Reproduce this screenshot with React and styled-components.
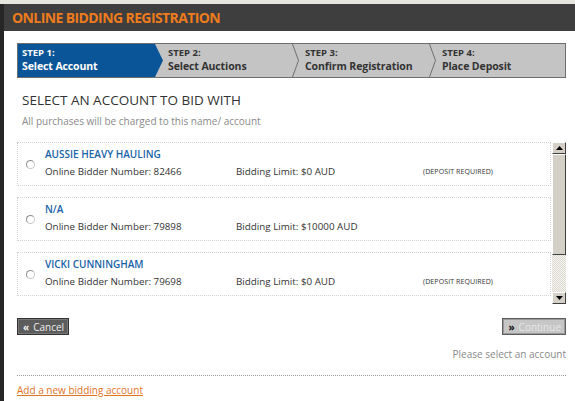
import React from "react";
import styled, { createGlobalStyle } from "styled-components";

const GlobalStyle = createGlobalStyle`
  html, body {
    margin: 0;
    padding: 0;
    background: #fff;
  }
  body {
    font-family: "Open Sans", "DejaVu Sans", sans-serif;
    color: #333;
  }
`;

const Page = styled.div`
  width: 575px;
  height: 401px;
  overflow: hidden;
  box-sizing: border-box;
  border-top: 4px solid #e6e6de;
  display: flex;
`;

const LeftRail = styled.div`
  width: 4px;
  flex: none;
  background: #262626;
`;

const Main = styled.div`
  flex: 1;
  min-width: 0;
  display: flex;
  flex-direction: column;
`;

const TitleBar = styled.div`
  height: 27px;
  flex: none;
  background: #3e3e3e;
  display: flex;
  align-items: center;
  padding-left: 8px;
  color: #ee7b1c;
  font-weight: 700;
  font-size: 14px;
  letter-spacing: -0.6px;
`;

const Content = styled.div`
  padding: 12px 9px 0 13px;
  display: flex;
  flex-direction: column;
`;

const Steps = styled.div`
  display: grid;
  grid-template-columns: 137px 137px 137px 1fr;
  height: 33px;
  border: 1px solid #6e6e6e;
  background: #c4c4c4;
`;

const Step = styled.div`
  display: flex;
  background: ${(p) => (p.$active ? "#0a5598" : "transparent")};
  color: ${(p) => (p.$active ? "#fff" : "#333")};
`;

const StepText = styled.div`
  padding: 2px 0 0 ${(p) => p.$pad}px;
  font-weight: 700;
`;

const StepNum = styled.div`
  font-size: 9.5px;
  line-height: 13px;
`;

const StepName = styled.div`
  font-size: 10.5px;
  line-height: 15px;
  white-space: nowrap;
  letter-spacing: -0.1px;
`;

const Sep = styled.svg`
  flex: none;
  width: 8px;
  height: 33px;
  display: block;
`;

const Heading = styled.h2`
  margin: 13px 0 0 5px;
  font-size: 13.5px;
  line-height: 18px;
  font-weight: 400;
  color: #333;
`;

const Sub = styled.p`
  margin: 5px 0 0 5px;
  font-size: 10px;
  line-height: 14px;
  color: #8a8a8a;
`;

const ListBox = styled.div`
  margin-top: 14px;
  height: 162px;
  display: flex;
  gap: 1px;
`;

const Items = styled.div`
  flex: 1;
  display: flex;
  flex-direction: column;
  gap: 11px;
  overflow: hidden;
`;

const Item = styled.label`
  flex: none;
  height: 44px;
  box-sizing: border-box;
  border: 1px dotted #d2d2d2;
  display: flex;
  align-items: center;
  padding: 0 0 2px 8px;
  gap: 10px;
  cursor: pointer;
`;

const Radio = styled.span`
  width: 9px;
  height: 9px;
  flex: none;
  box-sizing: border-box;
  border-radius: 50%;
  border: 1px solid #8c8c8c;
  border-right-color: #c8c8c8;
  border-bottom-color: #c8c8c8;
  background: #fff;
  margin-top: 2px;
`;

const ItemBody = styled.div`
  flex: 1;
  display: flex;
  flex-direction: column;
`;

const Name = styled.div`
  font-size: 10px;
  line-height: 17px;
  font-weight: 600;
  color: #1763a6;
`;

const Details = styled.div`
  display: grid;
  grid-template-columns: 191px 187px auto;
  align-items: center;
  font-size: 9.8px;
  line-height: 17px;
  color: #333;
`;

const Note = styled.span`
  font-size: 7px;
  letter-spacing: 0.1px;
`;

const Scrollbar = styled.div`
  width: 14px;
  flex: none;
  display: flex;
  flex-direction: column;
  background: repeating-conic-gradient(#f4f3f0 0% 25%, #dcd9d2 0% 50%) 0 0 / 2px 2px;
`;

const ScrollBtn = styled.div`
  height: 12px;
  flex: none;
  box-sizing: border-box;
  background: #d4d0c8;
  border: 1px solid;
  border-color: #fff #404040 #404040 #fff;
  display: flex;
  align-items: center;
  justify-content: center;
`;

const Thumb = styled.div`
  height: 101px;
  flex: none;
  box-sizing: border-box;
  background: #d4d0c8;
  border: 1px solid;
  border-color: #fff #404040 #404040 #fff;
`;

const Track = styled.div`
  flex: 1;
`;

const ButtonRow = styled.div`
  margin-top: 14px;
  display: flex;
  justify-content: space-between;
`;

const Button = styled.button`
  height: 17px;
  box-sizing: border-box;
  padding: 0 4px 0 5px;
  font-family: inherit;
  font-size: 10px;
  display: flex;
  align-items: center;
  gap: 4px;
  border: 1px solid ${(p) => (p.$disabled ? "#5e5e5e" : "#333")};
  background: ${(p) => (p.$disabled ? "#c6c6c6" : "#5c5c5c")};
  color: ${(p) => (p.$disabled ? "#e6e6e6" : "#eee")};
  box-shadow: inset 0 0 0 1px ${(p) => (p.$disabled ? "#9a9a9a" : "#777")};
  cursor: pointer;
`;

const Arrows = styled.span`
  font-weight: 700;
  font-size: 10px;
  color: ${(p) => p.$color};
`;

const Hint = styled.div`
  margin-top: 12px;
  text-align: right;
  font-size: 10px;
  line-height: 14px;
  color: #8a8a8a;
`;

const Divider = styled.hr`
  margin: 14px 0 0;
  border: 0;
  border-top: 1px dotted #9a9a9a;
`;

const AddLink = styled.a`
  margin-top: 7px;
  align-self: flex-start;
  font-size: 10px;
  line-height: 14px;
  color: #e2731f;
  text-decoration: underline;
`;

const steps = [
  { num: "STEP 1:", name: "Select Account" },
  { num: "STEP 2:", name: "Select Auctions" },
  { num: "STEP 3:", name: "Confirm Registration" },
  { num: "STEP 4:", name: "Place Deposit" },
];

const accounts = [
  { name: "AUSSIE HEAVY HAULING", number: "82466", limit: "$0 AUD", deposit: true },
  { name: "N/A", number: "79898", limit: "$10000 AUD", deposit: false },
  { name: "VICKI CUNNINGHAM", number: "79698", limit: "$0 AUD", deposit: true },
];

function Separator({ filled }) {
  return (
    <Sep viewBox="0 0 8 33">
      {filled ? (
        <polygon points="0,0 8,16.5 0,33" fill="#0a5598" />
      ) : (
        <polyline points="0.5,0 6.5,16.5 0.5,33" fill="none" stroke="#6e6e6e" strokeWidth="1" />
      )}
    </Sep>
  );
}

export default function App() {
  return (
    <>
      <GlobalStyle />
      <Page>
        <LeftRail />
        <Main>
          <TitleBar>ONLINE BIDDING REGISTRATION</TitleBar>
          <Content>
            <Steps>
              {steps.map((s, i) => (
                <Step key={s.num} $active={i === 0}>
                  {i > 0 && <Separator filled={i === 1} />}
                  <StepText $pad={i === 0 ? 4 : 5}>
                    <StepNum>{s.num}</StepNum>
                    <StepName>{s.name}</StepName>
                  </StepText>
                </Step>
              ))}
            </Steps>

            <Heading>SELECT AN ACCOUNT TO BID WITH</Heading>
            <Sub>All purchases will be charged to this name/ account</Sub>

            <ListBox>
              <Items>
                {accounts.map((a) => (
                  <Item key={a.number}>
                    <Radio />
                    <ItemBody>
                      <Name>{a.name}</Name>
                      <Details>
                        <span>Online Bidder Number: {a.number}</span>
                        <span>Bidding Limit: {a.limit}</span>
                        {a.deposit ? <Note>(DEPOSIT REQUIRED)</Note> : <span />}
                      </Details>
                    </ItemBody>
                  </Item>
                ))}
              </Items>
              <Scrollbar>
                <ScrollBtn>
                  <svg width="7" height="4" viewBox="0 0 7 4">
                    <polygon points="3.5,0 7,4 0,4" fill="#000" />
                  </svg>
                </ScrollBtn>
                <Thumb />
                <Track />
                <ScrollBtn>
                  <svg width="7" height="4" viewBox="0 0 7 4">
                    <polygon points="0,0 7,0 3.5,4" fill="#000" />
                  </svg>
                </ScrollBtn>
              </Scrollbar>
            </ListBox>

            <ButtonRow>
              <Button>
                <Arrows $color="#eee">«</Arrows>
                Cancel
              </Button>
              <Button $disabled>
                <Arrows $color="#111">»</Arrows>
                Continue
              </Button>
            </ButtonRow>

            <Hint>Please select an account</Hint>
            <Divider />
            <AddLink href="#">Add a new bidding account</AddLink>
          </Content>
        </Main>
      </Page>
    </>
  );
}
